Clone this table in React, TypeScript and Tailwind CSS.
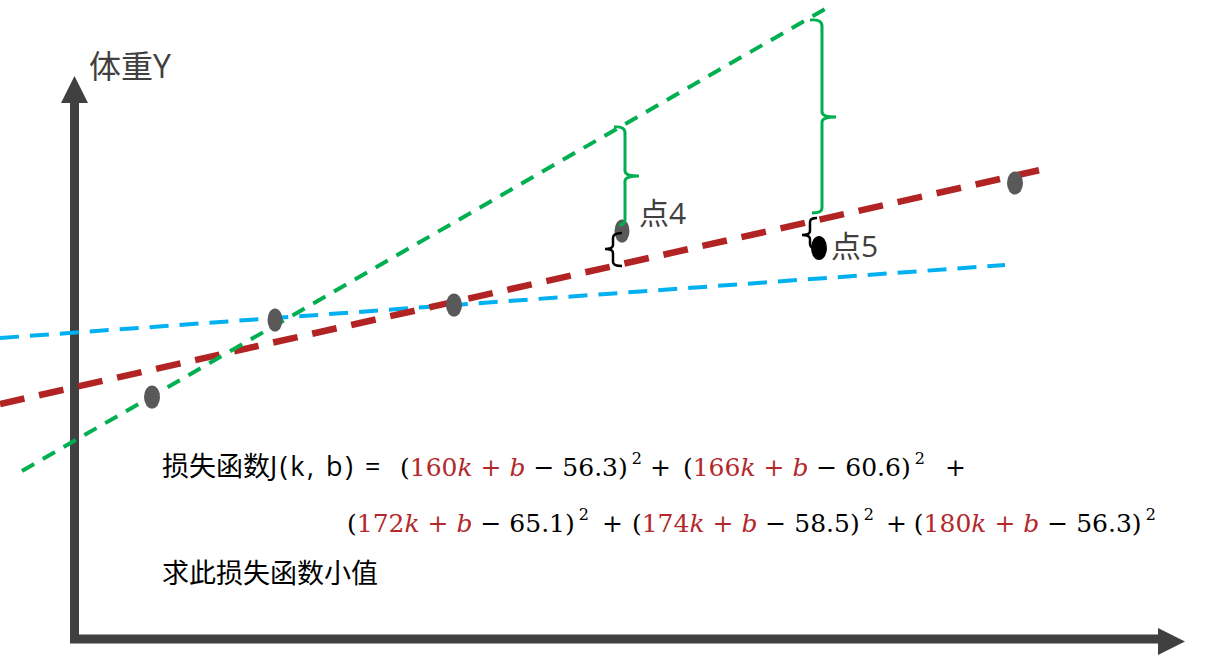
import React from "react";

const Term = ({ n, c }: { n: string; c: string }) => (
  <span className="whitespace-pre">
    (<span className="text-[#b3292b]">{n}<i>k</i> + <i>b</i></span> − {c})
    <span className="relative -top-[12px] ml-[4px] text-[16px]">2</span>
  </span>
);

const cjk = "font-['Open_Sans','Noto_Sans_CJK_SC',sans-serif]";

export default function App() {
  return (
    <div className="relative h-[669px] w-[1213px] overflow-hidden bg-white">
      <svg width={1213} height={669} className="absolute inset-0">
        {/* axes */}
        <path d="M74.5 100 V639 H1160" fill="none" stroke="#404040" strokeWidth={9} strokeLinejoin="miter" />
        <polygon points="61,103 88,103 74.5,76" fill="#404040" />
        <polygon points="1158,628 1158,655 1185,641.5" fill="#404040" />
        {/* lines */}
        <line x1={0} y1={338} x2={1005} y2={265} stroke="#00b0f0" strokeWidth={4} strokeDasharray="19 11" />
        <line x1={0} y1={404} x2={1040} y2={170} stroke="#b22424" strokeWidth={6.5} strokeDasharray="25 15" />
        <line x1={22} y1={471} x2={832} y2={5} stroke="#00b050" strokeWidth={4} strokeDasharray="14 10" />
        {/* points */}
        <ellipse cx={152} cy={397} rx={8} ry={11.5} fill="#595959" />
        <ellipse cx={275} cy={320} rx={7.5} ry={11.5} fill="#595959" />
        <ellipse cx={454} cy={305} rx={8} ry={11.5} fill="#595959" />
        <ellipse cx={622} cy={231} rx={7.5} ry={11.5} fill="#595959" />
        <ellipse cx={1015} cy={183} rx={8} ry={11.5} fill="#595959" />
        <ellipse cx={819} cy={248} rx={8} ry={12} fill="#000000" />
        {/* green braces */}
        <path
          d="M614 127 Q625 126 625 133 V171 Q625 176 639 176 Q625 176 625 181 V219 Q625 225 619 225"
          fill="none"
          stroke="#00b050"
          strokeWidth={3}
        />
        <path
          d="M810 20 Q822 19 822 26 V112 Q822 117 836 117 Q822 117 822 122 V208 Q822 213 812 213"
          fill="none"
          stroke="#00b050"
          strokeWidth={3}
        />
        {/* black braces */}
        <path
          d="M622 233 Q613 233 613 238 V245 Q613 249 605 249 Q613 249 613 253 V262 Q613 266 622 266"
          fill="none"
          stroke="#000000"
          strokeWidth={2.5}
        />
        <path
          d="M817 218 Q810 218 810 222 V231 Q810 235 802 235 Q810 235 810 239 V244 Q810 248 816 249"
          fill="none"
          stroke="#000000"
          strokeWidth={2.5}
        />
      </svg>

      {/* labels on canvas */}
      <div className={`absolute left-[89px] top-[50px] text-[32px] leading-none text-[#404040] ${cjk}`}>
        体重Y
      </div>
      <div className={`absolute left-[639px] top-[198px] text-[30px] leading-none text-[#404040] ${cjk}`}>
        点4
      </div>
      <div className={`absolute left-[831px] top-[231px] text-[30px] leading-none text-[#404040] ${cjk}`}>
        点5
      </div>

      {/* formula */}
      <div className="absolute left-[162px] top-[446px] flex flex-col text-black">
        <div className="flex h-[42px] items-baseline">
          <span className={`w-[227px] whitespace-pre text-[27px] ${cjk}`}>
            损失函数<span className="tracking-[2.5px]">J(k, b) =</span>
          </span>
          <span className="ml-[11px] flex items-baseline text-[25px] font-['DejaVu_Serif',serif]">
            <Term n="160" c="56.3" />
            <span className="ml-[8px]">+</span>
            <span className="ml-[12px]"><Term n="166" c="60.6" /></span>
            <span className="ml-[20px]">+</span>
          </span>
        </div>
        <div className="ml-[185px] mt-[17px] flex h-[42px] items-baseline text-[25px] font-['DejaVu_Serif',serif]">
          <Term n="172" c="65.1" />
          <span className="ml-[13px]">+</span>
          <span className="ml-[9px]"><Term n="174" c="58.5" /></span>
          <span className="ml-[12px]">+</span>
          <span className="ml-[7px]"><Term n="180" c="56.3" /></span>
        </div>
        <div className={`mt-[6px] text-[27px] leading-[40px] ${cjk}`}>求此损失函数小值</div>
      </div>
    </div>
  );
}
